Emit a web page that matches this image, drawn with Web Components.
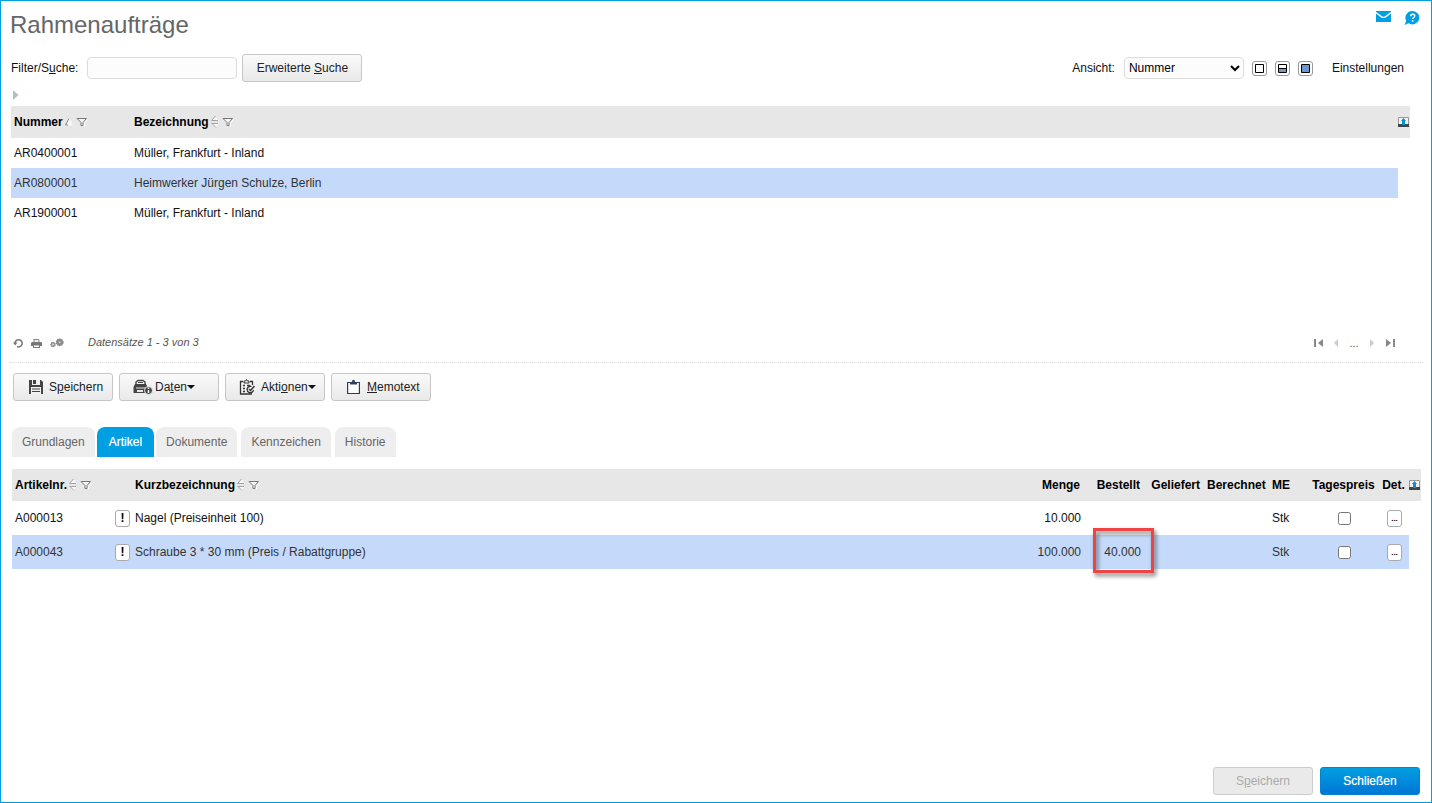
<!DOCTYPE html>
<html lang="de">
<head>
<meta charset="utf-8">
<title>Rahmenaufträge</title>
<style>
    body {
        margin: 0;
        font: 12px/16px "Liberation Sans", Arial, sans-serif;
        color: #111;
        background: #fff;
    }
</style>
</head>
<body>
<app-page heading="Rahmenaufträge">
    <search-bar></search-bar>
    <data-grid id="orders"></data-grid>
    <pager-bar>Datensätze 1 - 3 von 3</pager-bar>
    <action-bar>
        <tool-button icon="save">S<u>p</u>eichern</tool-button>
        <tool-button icon="data" menu>Da<u>t</u>en</tool-button>
        <tool-button icon="actions" menu>Akti<u>o</u>nen</tool-button>
        <tool-button icon="memo"><u>M</u>emotext</tool-button>
    </action-bar>
    <tab-bar tabs="Grundlagen,Artikel,Dokumente,Kennzeichen,Historie" active="Artikel"></tab-bar>
    <data-grid id="articles" class="articles"></data-grid>
    <tool-button slot="footer" disabled>S<u>p</u>eichern</tool-button>
    <tool-button slot="footer" primary>Schließen</tool-button>
</app-page>

<script>
const ICONS = {
    mail: [15, 11, `<path d="M0 0h15v11H0z" fill="#009fe3"/><path d="M0 1.500l5.500 4.300q2 1.200 4 0L15 1.500" fill="none" stroke="#fff" stroke-width="1.400"/>`],
    help: [16, 14, `<path d="M8.500 0a7 6.700 0 1 1-4 12.300L.5 14l1.700-4A6.800 6.800 0 0 1 8.500 0z" fill="#009fe3"/><path d="M6.700 5.300q0-2 2-2t2 1.700q0 .9-1 1.500t-1 1.600" fill="none" stroke="#fff" stroke-width="1.400"/><path d="M7.900 9.200h1.600v1.500H7.900z" fill="#fff"/>`],
    expand: [6, 12, `<path d="M0 1l5.500 5L0 11z" fill="#a9c1cd"/>`],
    asc: [8, 8, `<path d="M0 7.500h8L4.500 0z" fill="#f8f8f8"/><path d="M.5 7L4 .5M.5 7H3" fill="none" stroke="#888"/>`],
    sort: [8, 12, `<path d="M.5 5L4.500.5 8 5zM.5 7l4 4.500L8 7z" fill="#f8f8f8"/><path d="M4.500 0L.5 4.500H7M.5 7.500H7M1 7.500l4 4" fill="none" stroke="#a5a5a5"/>`],
    filter: [12, 10, `<path d="M1 1.500h9.500L7 5.500v3H5v-3z" fill="#f5f5f5" stroke="#777"/><path d="M8.500 9V6l3-3.500" fill="none" stroke="#fff"/>`],
    columns: [11, 10, `<path d="M.5.500h10v7H.5z" fill="#f4f4f4" stroke="#999"/><path d="M0 7h11v3H0z" fill="#444"/><path d="M5.500 1l2.500 3H7v4H4V4H3z" fill="#0a8fd0"/>`],
    refresh: [10, 10, `<path d="M2 5.500A3.600 3.600 0 1 1 4 8.500" fill="none" stroke="#777" stroke-width="1.500"/><path d="M0 4.500h4.500L2.200 7.500z" fill="#777"/>`],
    print: [11, 10, `<path d="M2.500 1h5l1 1v2h-6z" fill="#888"/><path d="M3.500 2h4v2h-4z" fill="#eee"/><path d="M0 5l1-1h9l1 1v3H0z" fill="#777"/><path d="M2 7h7v3H2z" fill="#777"/><path d="M3 7.500h5V9H3z" fill="#fff"/>`],
    gears: [14, 10, `<circle cx="3" cy="6.500" r="2.200" fill="#999" stroke="#888" stroke-width="1.200" stroke-dasharray="1.200 .6"/><circle cx="3" cy="6.500" r=".8" fill="#eee"/><circle cx="9.700" cy="4.300" r="3.300" fill="#8a8a8a" stroke="#888" stroke-width="1.200" stroke-dasharray="1.500 .6"/><circle cx="9.700" cy="4.300" r="1.100" fill="#ccc"/>`],
    first: [9, 8, `<path d="M0 0h2v8H0zM9 0v8L4 4z" fill="#888"/>`],
    prev: [4, 8, `<path d="M4 0v8L0 4z" fill="#ccc"/>`],
    next: [4, 8, `<path d="M0 0v8l4-4z" fill="#ccc"/>`],
    last: [9, 8, `<path d="M9 0H7v8h2zM0 0v8l5-4z" fill="#888"/>`],
    caret: [8, 4, `<path d="M0 0h8L4 4z" fill="#111"/>`],
    save: [20, 16, `<path d="M2 1h12l2 2v12H2z" fill="#444"/><path d="M5 1h8v5H5z" fill="#f2f2f2"/><path d="M6 1h3v4H6z" fill="#444"/><path d="M4 8h10v7H4z" fill="#f2f2f2"/><path d="M5 10h8M5 12.500h8" stroke="#444"/>`],
    data: [20, 16, `<path d="M3 5V3l2-1.500h5L12 3v2" fill="none" stroke="#444" stroke-width="1.400"/><path d="M5 3.500h5" stroke="#444"/><path d="M2 5h11l1.500 3v6H.5V8z" fill="#444"/><path d="M3 8.500h9v1H3zM4 11h6v2H4z" fill="#e8e8e8"/><circle cx="15.500" cy="11.500" r="4" fill="#444" stroke="#f0f0f0"/><path d="M15.500 8.500v1.500M15.500 11v3" stroke="#fff" stroke-width="1.500"/>`],
    actions: [20, 16, `<path d="M4 2.500H1.500v12.500H13M11 2.500h2.500V6" fill="none" stroke="#333" stroke-width="1.300"/><path d="M5 4V2h1.500L7.500.5l1 1.500H10v2z" fill="#f2f2f2" stroke="#333"/><path d="M4 6.500h2M4 9.500h2M4 12.500h2M8 6.500h3" fill="none" stroke="#333" stroke-width="1.500"/><path d="M12.500 7.500a3.200 3.200 0 1 0 2 3.500" fill="none" stroke="#333" stroke-width="1.300"/><path d="M10 10l1.500 1.500L15.500 7" fill="none" stroke="#333" stroke-width="1.500"/>`],
    memo: [20, 16, `<path d="M2.600 3.500h11.800V14.500H2.600z" fill="#fff" stroke="#2c3f5a" stroke-width="1.200"/><path d="M5 5.500V3h2L7.500 1h2l.5 2h2v2.500z" fill="#2c3f5a"/>`],
    empty: [9, 9, `<path d="M.5.500h8v8h-8z" fill="#fff" stroke="#000"/>`],
    half: [9, 9, `<path d="M.5.500h8v8h-8z" fill="#fff"/><path d="M1 5h7v3H1z" fill="#8493bf"/><path d="M.5 4.500h8M.5.500h8v8h-8z" fill="none" stroke="#000"/>`],
    full: [9, 9, `<path d="M.5.500h8v8h-8z" fill="#6c98d2" stroke="#000"/>`],
};

class AppIcon extends HTMLElement {
    connectedCallback() {
        const [width, height, shape] = ICONS[this.getAttribute('name')];
        this.attachShadow({ mode: 'open' }).innerHTML = `
            <style>
                :host { display: inline-flex; flex: none; }
                svg { display: block; }
            </style>
            <svg width="${width}" height="${height}" viewBox="0 0 ${width} ${height}" aria-hidden="true">${shape}</svg>
        `;
    }
}

class AppPage extends HTMLElement {
    connectedCallback() {
        this.attachShadow({ mode: 'open' }).innerHTML = `
            <style>
                :host {
                    display: flex;
                    flex-direction: column;
                    box-sizing: border-box;
                    min-height: 100vh;
                    border: 1px solid #009fe0;
                }

                header {
                    display: flex;
                    justify-content: space-between;
                    align-items: flex-start;
                    padding: 10px 11px 15px 9px;
                }

                h1 {
                    margin: 0;
                    font-size: 24px;
                    line-height: 28px;
                    font-weight: normal;
                    color: #666;
                }

                nav { display: flex; gap: 13px; }
                nav a { display: flex; }

                footer {
                    display: flex;
                    justify-content: flex-end;
                    gap: 7px;
                    margin-top: auto;
                    padding: 8px 11px 7px;
                }
            </style>
            <header>
                <h1>${this.getAttribute('heading')}</h1>
                <nav>
                    <a href="#mail" aria-label="Nachricht"><app-icon name="mail"></app-icon></a>
                    <a href="#help" aria-label="Hilfe"><app-icon name="help"></app-icon></a>
                </nav>
            </header>
            <slot></slot>
            <footer><slot name="footer"></slot></footer>
        `;
    }
}

class ToolButton extends HTMLElement {
    connectedCallback() {
        const icon = this.getAttribute('icon');
        this.attachShadow({ mode: 'open' }).innerHTML = `
            <style>
                :host { display: block; min-width: 100px; }

                button {
                    display: flex;
                    align-items: center;
                    justify-content: ${icon ? 'flex-start' : 'center'};
                    box-sizing: border-box;
                    width: 100%;
                    height: 28px;
                    padding: 0 ${icon ? '0 0 13px' : '13px'};
                    border: 1px solid #c6c6c6;
                    border-radius: 3px;
                    background: linear-gradient(#fafafa, #e9e9e9);
                    font: inherit;
                    color: #222;
                    white-space: nowrap;
                }

                button > app-icon:first-child { margin-right: 2px; }
                button:disabled { color: #aaa; background: #eaeaea; border-color: #ccc; }

                :host([primary]) button {
                    color: #fff;
                    border-color: #0083d0;
                    background: linear-gradient(#009fe0, #0076d6);
                    text-shadow: 0 0 1px #fff8;
                }
            </style>
            <button type="button" ${this.hasAttribute('disabled') ? 'disabled' : ''}>
                ${icon ? `<app-icon name="${icon}"></app-icon>` : ''}
                <span><slot></slot></span>
                ${this.hasAttribute('menu') ? '<app-icon name="caret"></app-icon>' : ''}
            </button>
        `;
    }
}

class SearchBar extends HTMLElement {
    connectedCallback() {
        this.attachShadow({ mode: 'open' }).innerHTML = `
            <style>
                :host { display: block; padding: 0 27px 0 10px; }
                .row, .filter, .view, .modes { display: flex; align-items: center; }
                .row { justify-content: space-between; }

                input, select {
                    box-sizing: border-box;
                    height: 22px;
                    border: 1px solid #ddd;
                    border-radius: 4px;
                    background: #fcfcfc;
                    font: inherit;
                    color: #000;
                }

                input { width: 150px; margin: 0 5px 0 9px; }
                select { width: 120px; margin: 0 8px 0 9px; }
                tool-button { min-width: 120px; }
                .modes { gap: 8px; margin-right: 19px; }

                .modes button {
                    display: flex;
                    align-items: center;
                    justify-content: center;
                    box-sizing: border-box;
                    width: 15px;
                    height: 15px;
                    padding: 0;
                    border: 1px solid #999;
                    border-radius: 3px;
                    background: #fff;
                }

                a { color: inherit; text-decoration: none; }

                .expand {
                    display: flex;
                    align-items: center;
                    height: 24px;
                    padding: 2px 0 0 2px;
                    border: 0;
                    background: none;
                }
            </style>
            <div class="row">
                <div class="filter">
                    <label for="filter">Filter/S<u>u</u>che:</label>
                    <input id="filter" type="text">
                    <tool-button>Erweiterte <u>S</u>uche</tool-button>
                </div>
                <div class="view">
                    <label for="view">Ansicht:</label>
                    <select id="view"><option>Nummer</option></select>
                    <div class="modes">
                        <button type="button" aria-label="Nur Liste"><app-icon name="empty"></app-icon></button>
                        <button type="button" aria-label="Geteilt"><app-icon name="half"></app-icon></button>
                        <button type="button" aria-label="Nur Details"><app-icon name="full"></app-icon></button>
                    </div>
                    <a href="#settings">Einstellungen</a>
                </div>
            </div>
            <button class="expand" type="button" aria-label="Aufklappen"><app-icon name="expand"></app-icon></button>
        `;
    }
}

class DataGrid extends HTMLElement {
    constructor() {
        super();
        this.attachShadow({ mode: 'open' });
    }

    set data(value) {
        this._data = value;
        this.render();
    }

    render() {
        const { columns, rows, selected } = this._data;

        this.shadowRoot.innerHTML = `
            ${DataGrid.style}
            <table>
                <colgroup>
                    ${columns.map(col => `<col style="width: ${col.width || 'auto'}">`).join('')}
                    <col style="width: 12px">
                </colgroup>
                <thead>
                    <tr>
                        ${columns.map(col => this.header(col)).join('')}
                        <th class="tail"><button type="button" aria-label="Spalten"><app-icon name="columns"></app-icon></button></th>
                    </tr>
                </thead>
                <tbody>
                    ${rows.map((row, i) => `
                        <tr class="${i === selected ? 'selected' : ''}">
                            ${columns.map((col, c) => `<td class="${col.align || ''}">${this.cell(col, row[c])}</td>`).join('')}
                            <td class="tail"></td>
                        </tr>
                    `).join('')}
                </tbody>
            </table>
        `;
    }

    header(col) {
        const icons = col.sort ? `<app-icon name="${col.sort}"></app-icon><app-icon name="filter"></app-icon>` : '';
        return `<th class="${col.align || ''}"><span>${col.title}${icons}</span></th>`;
    }

    cell(col, value) {
        if (col.type === 'check') return `<input type="checkbox" aria-label="${col.title}">`;
        if (col.type === 'details') return '<button class="small dots" type="button">...</button>';
        if (col.type === 'flagged') return `<div class="flagged">${value}<button class="small" type="button">!</button></div>`;
        if (value && value.marked) return `<div class="marked">${value.text}</div>`;
        return value || '';
    }

    static get style() {
        return `
            <style>
                :host {
                    display: block;
                    min-height: 224px;
                    margin: 0 21px 0 10px;
                    --row: 30px;
                }

                :host(.articles) {
                    min-height: 0;
                    margin: 12px 10px 0 11px;
                    --row: 34px;
                }

                table {
                    width: 100%;
                    table-layout: fixed;
                    border-collapse: collapse;
                }

                th, td { padding: 0 3px; text-align: left; white-space: nowrap; }
                th { height: 32px; background: #e7e7e7; color: #000; }
                td { height: var(--row); }
                th.right { padding-right: 4px; }
                .right { text-align: right; }
                .center { text-align: center; }
                th.center { padding: 0; }
                td.center { padding: 0 2px 0 4px; }
                th span { display: inline-flex; align-items: center; }
                th span app-icon { margin-left: 2px; }
                th span app-icon + app-icon { margin-left: 3px; }
                .selected td { background: #c5dafa; color: #333; }
                .selected td.tail { background: none; }
                .tail { padding: 0; }
                .tail button { display: flex; padding: 0; border: 0; background: none; }

                .flagged {
                    display: flex;
                    align-items: center;
                    justify-content: space-between;
                    margin-right: -1px;
                }

                .small {
                    box-sizing: border-box;
                    width: 15px;
                    height: 17px;
                    padding: 0;
                    border: 1px solid #aaa;
                    border-radius: 3px;
                    background: #fff;
                    font: bold 12px/15px "Liberation Sans", Arial, sans-serif;
                    color: #000;
                }

                .dots { font-size: 8px; }

                input {
                    display: block;
                    width: 13px;
                    height: 13px;
                    margin: 0 auto;
                }

                .marked { position: relative; }

                .marked::after {
                    content: "";
                    position: absolute;
                    inset: -16px -13px -13px 6px;
                    border: 3px solid #f04444;
                    filter: drop-shadow(2px 3px 2px #0008);
                }
            </style>
        `;
    }
}

class PagerBar extends HTMLElement {
    connectedCallback() {
        this.attachShadow({ mode: 'open' }).innerHTML = `
            <style>
                :host {
                    display: flex;
                    align-items: center;
                    height: 24px;
                    margin: 0 8px;
                    padding: 0 24px 8px 4px;
                    border-bottom: 1px dotted #ddd;
                    font-size: 11px;
                    color: #555;
                }

                button {
                    display: flex;
                    align-items: center;
                    justify-content: center;
                    height: 18px;
                    padding: 0;
                    border: 0;
                    background: none;
                }

                .tools { display: flex; gap: 8px; padding-top: 1px; margin-right: 24px; }
                .pages { display: flex; align-items: center; padding-top: 1px; margin-left: auto; }
                .pages > * { width: 18px; text-align: center; }
            </style>
            <div class="tools">
                <button type="button" aria-label="Aktualisieren"><app-icon name="refresh"></app-icon></button>
                <button type="button" aria-label="Drucken"><app-icon name="print"></app-icon></button>
                <button type="button" aria-label="Optionen"><app-icon name="gears"></app-icon></button>
            </div>
            <em><slot></slot></em>
            <div class="pages">
                <button type="button" aria-label="Erste Seite"><app-icon name="first"></app-icon></button>
                <button type="button" aria-label="Vorherige Seite"><app-icon name="prev"></app-icon></button>
                <span>...</span>
                <button type="button" aria-label="Nächste Seite"><app-icon name="next"></app-icon></button>
                <button type="button" aria-label="Letzte Seite"><app-icon name="last"></app-icon></button>
            </div>
        `;
    }
}

class ActionBar extends HTMLElement {
    connectedCallback() {
        this.attachShadow({ mode: 'open' }).innerHTML = `
            <style>
                :host { display: flex; gap: 6px; padding: 10px 12px 26px; }
            </style>
            <slot></slot>
        `;
    }
}

class TabBar extends HTMLElement {
    connectedCallback() {
        const active = this.getAttribute('active');
        const tabs = this.getAttribute('tabs').split(',');

        this.attachShadow({ mode: 'open' }).innerHTML = `
            <style>
                :host { display: flex; gap: 4px; padding: 0 11px; }

                button {
                    height: 30px;
                    padding: 0 10px;
                    border: 0;
                    border-radius: 8px 8px 0 0;
                    background: #eee;
                    font: inherit;
                    color: #666;
                }

                button[aria-selected="true"] {
                    margin: 0 -2px;
                    padding: 0 12px;
                    background: #009fe3;
                    color: #fff;
                    text-shadow: 0 0 1px #fff8;
                }
            </style>
            ${tabs.map(tab => `<button type="button" role="tab" aria-selected="${tab === active}">${tab}</button>`).join('')}
        `;
        this.setAttribute('role', 'tablist');
    }
}

customElements.define('app-icon', AppIcon);
customElements.define('app-page', AppPage);
customElements.define('tool-button', ToolButton);
customElements.define('search-bar', SearchBar);
customElements.define('data-grid', DataGrid);
customElements.define('pager-bar', PagerBar);
customElements.define('action-bar', ActionBar);
customElements.define('tab-bar', TabBar);

document.querySelector('#orders').data = {
    columns: [
        { title: 'Nummer', width: '120px', sort: 'asc' },
        { title: 'Bezeichnung', sort: 'sort' },
    ],
    rows: [
        ['AR0400001', 'Müller, Frankfurt - Inland'],
        ['AR0800001', 'Heimwerker Jürgen Schulze, Berlin'],
        ['AR1900001', 'Müller, Frankfurt - Inland'],
    ],
    selected: 1,
};

document.querySelector('#articles').data = {
    columns: [
        { title: 'Artikelnr.', width: '120px', sort: 'sort', type: 'flagged' },
        { title: 'Kurzbezeichnung', sort: 'sort' },
        { title: 'Menge', width: '60px', align: 'right' },
        { title: 'Bestellt', width: '60px', align: 'right' },
        { title: 'Geliefert', width: '60px', align: 'right' },
        { title: 'Berechnet', width: '65px', align: 'right' },
        { title: 'ME', width: '40px' },
        { title: 'Tagespreis', width: '69px', align: 'center', type: 'check' },
        { title: 'Det.', width: '31px', align: 'center', type: 'details' },
    ],
    rows: [
        ['A000013', 'Nagel (Preiseinheit 100)', '10.000', '', '', '', 'Stk'],
        ['A000043', 'Schraube 3 * 30 mm (Preis / Rabattgruppe)', '100.000', { text: '40.000', marked: true }, '', '', 'Stk'],
    ],
    selected: 1,
};
</script>
</body>
</html>
